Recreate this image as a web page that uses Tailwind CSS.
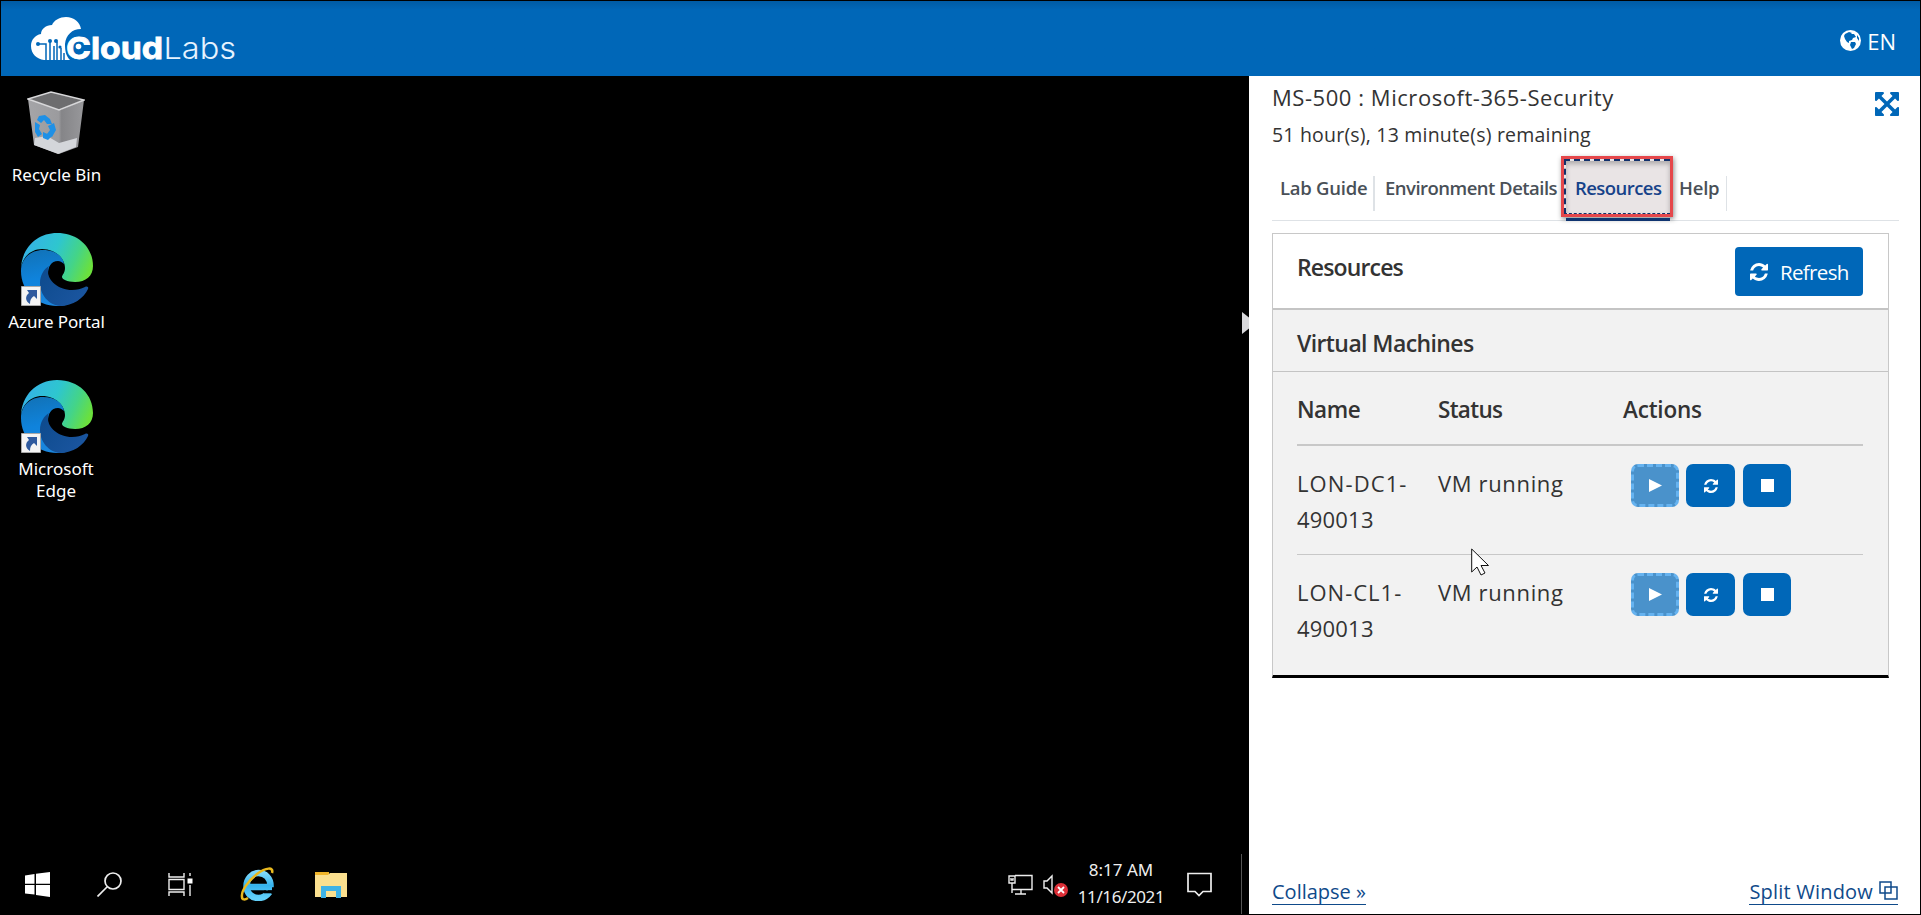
<!DOCTYPE html>
<html lang="en">
<head>
<meta charset="utf-8">
<title>CloudLabs</title>
<script src="https://cdn.jsdelivr.net/npm/@tailwindcss/browser@4"></script>
</head>
<body class="h-[915px] w-[1921px] overflow-hidden bg-black font-['Open_Sans','Noto_Sans',sans-serif]">
<svg class="absolute size-0">
  <symbol id="refresh" viewBox="0 0 1536 1536"><path fill="currentColor" d="M1511 928q0 5-1 7-64 268-268 434.5t-478 166.5q-146 0-282.5-55t-243.5-157l-129 129q-19 19-45 19t-45-19-19-45v-448q0-26 19-45t45-19h448q26 0 45 19t19 45-19 45l-137 137q71 66 161 102t187 36q134 0 250-65t186-179q11-17 53-117 8-23 30-23h192q13 0 22.5 9.5t9.5 22.5zm25-800v448q0 26-19 45t-45 19h-448q-26 0-45-19t-19-45 19-45l138-138q-148-137-349-137-134 0-250 65t-186 179q-11 17-53 117-8 23-30 23h-199q-13 0-22.5-9.5t-9.5-22.5v-7q65-268 270-434.5t480-166.5q146 0 284 55.5t245 156.5l130-129q19-19 45-19t45 19 19 45z"/></symbol>
  <symbol id="edge" viewBox="0 0 72 73">
    <path fill="url(#eg)" d="M0 37C0 15 16 0 36 0c22 0 36 15 36 33 0 10-7 16-18 16-8 0-13-3-13-5 0-2 3-4 3-9 0-9-9-19-23-19C9 16 0 26 0 37z"/>
    <path fill="url(#eb)" d="M0 38C0 26 9 17 22 17c12 0 20 6 21 14-2-2-4-3-6-3-7 0-10 6-10 13 0 15 14 25 26 27-4 3-10 5-17 5C16 73 0 58 0 38z"/>
    <path fill="url(#ed)" d="M28 33c-5 3-9 9-9 17 0 12 9 22 20 23 13 0 24-8 28-17 1-2-1-3-3-2-4 2-8 3-13 3-14 0-24-10-24-18 0-3 0-4 1-6z"/>
  </symbol>
  <symbol id="shortcut" viewBox="0 0 20 20">
    <path fill="#f4f4f4" stroke="#a9a9a9" d="M.5.5h19v19H.5z"/>
    <path fill="#2f5a9e" d="M6 4h10v9l-3-3c-3 2-4 4-4 8-5-3-5-8-1-11z"/>
  </symbol>
  <defs>
    <linearGradient id="eg" x1="0" y1=".3" x2="1" y2=".6"><stop offset="0" stop-color="#35b1e8"/><stop offset=".45" stop-color="#2ec6cf"/><stop offset=".75" stop-color="#44d488"/><stop offset="1" stop-color="#6be03c"/></linearGradient>
    <linearGradient id="eb" x1=".3" y1="0" x2=".5" y2="1"><stop offset="0" stop-color="#1173b9"/><stop offset=".5" stop-color="#0f83dc"/><stop offset="1" stop-color="#1b86dd"/></linearGradient>
    <linearGradient id="ed" x1="0" y1="0" x2="1" y2=".6"><stop offset="0" stop-color="#0d4a8c"/><stop offset="1" stop-color="#1a559f"/></linearGradient>
    <linearGradient id="ie" x1="0" y1="0" x2="0" y2="1"><stop offset="0" stop-color="#7fd8fa"/><stop offset=".5" stop-color="#35b3ee"/><stop offset="1" stop-color="#62d0fa"/></linearGradient>
    <linearGradient id="bin" x1="0" y1="0" x2="1" y2="0"><stop offset="0" stop-color="#a5a5a8"/><stop offset=".55" stop-color="#9b9b9e"/><stop offset=".6" stop-color="#858588"/><stop offset="1" stop-color="#98989b"/></linearGradient>
  </defs>
</svg>

<div class="flex h-[914px] w-[1920px] flex-col pt-px pl-px">
  <header class="flex h-[75px] shrink-0 items-center justify-between bg-[#0067b8] bg-linear-to-b from-[#005ba4] to-[#0067b8] to-12% pr-[24px] pl-[29px] text-white">
    <svg class="h-[50px] w-[210px]" viewBox="30 14 210 50">
      <path fill="#fff" d="M44 60c-7-1-13-6-13-14 0-6 4-11 10-12 0-5 5-9 11-9 2-5 8-8 14-8 8 0 14 5 15 12-9 0-15 6-16 15 0 7 1 12 5 16z"/>
      <g fill="none" stroke="#0067b8" stroke-width="1.5"><path d="M37 44h9v16M50 42v18M54 46v14M57 42v18M61 48v12M64 53v7"/></g>
      <g fill="#0067b8"><circle cx="38" cy="44" r="2"/><circle cx="50" cy="41" r="2"/><circle cx="56" cy="41" r="2"/><circle cx="60" cy="47" r="1.600"/></g>
      <text x="66" y="58.500" textLength="97" lengthAdjust="spacingAndGlyphs" fill="#fff" stroke="#fff" stroke-width=".8" class="font-['Inter',sans-serif] text-[30px] font-bold">Cloud</text>
      <text x="163.500" y="58.500" textLength="72.500" lengthAdjust="spacingAndGlyphs" fill="#e6f3ff" class="font-['Inter',sans-serif] text-[30px] font-light">Labs</text>
      <circle cx="78.500" cy="46.500" r="2.800" fill="#fff"/>
    </svg>
    <div class="flex items-center gap-[6px]">
      <svg class="mt-1 size-[21px]" viewBox="0 0 21 21"><circle cx="10.500" cy="10.500" r="10.500" fill="#fff"/><path fill="#0067b8" d="M5 4l4-2 3 1-1 1 3 0 2 3-3 1-1 2-3 1 0 2-2-1-2-3-1-3zM11 12l4 0 1 2-2 4-2 1-2-4zM17 5l2 3v3l-2-3z"/></svg>
      <span class="mt-[5px] text-[22px] leading-7 whitespace-nowrap">EN</span>
    </div>
  </header>

  <div class="flex min-h-0 flex-1">
    <main class="relative flex w-[1248px] shrink-0 flex-col justify-between bg-black text-white">
      <div class="flex w-[110px] flex-col items-center font-['Noto_Sans',sans-serif] text-[17px] leading-[23px]">
        <svg class="mt-[15px] h-[64px] w-[58px]" viewBox="0 0 58 64">
          <path fill="url(#bin)" d="M1 8l32 11 24-10-6 47-19 7-25-9z"/><path fill="#6d6d6f" d="M2 8L24 1l32 8-24 10z"/><path fill="#d4d6da" d="M7 54l1-7 12-2 12 7 18-5-1 9-18 7z"/>
          <path fill="none" stroke="#d8d8da" stroke-width="1.500" d="M1 8L24 1l33 8-25 10z"/>
          <path fill="#1e90e6" d="M12 25l6-1 5 4 2 5-5 0-3-4-3 3-4-3zM8 31l5 3-1 4 3 5-4 3-3-5zM27 32l2 7-4 7-5-3 3-4-2-4zM16 41l9 4-4 4-5-2z"/>
        </svg>
        <span class="mt-[8px] ml-px whitespace-nowrap">Recycle Bin</span>
        <div class="relative mt-[47px] ml-px h-[73px] w-[72px]"><svg class="size-full"><use href="#edge"/></svg><svg class="absolute bottom-0 left-0 size-5"><use href="#shortcut"/></svg></div>
        <span class="mt-[4px] ml-px tracking-[-0.1px] whitespace-nowrap">Azure Portal</span>
        <div class="relative mt-[47px] ml-px h-[73px] w-[72px]"><svg class="size-full"><use href="#edge"/></svg><svg class="absolute bottom-0 left-0 size-5"><use href="#shortcut"/></svg></div>
        <span class="mt-[4px] whitespace-nowrap">Microsoft</span>
        <span class="-mt-px whitespace-nowrap">Edge</span>
      </div>
      <div class="absolute top-[236px] right-0 h-[22px] w-[7px] bg-[#d9d9dc] [clip-path:polygon(0_0,100%_25%,100%_75%,0_100%)]"></div>
      <div class="flex h-[60px] items-center justify-between pl-[24px]">
        <div class="flex items-center">
          <svg class="size-[25px]" viewBox="0 0 25 25" fill="#fff"><path d="M0 3.500L9.500 2v9.700H0zM11 1.800L25 0v11.700H11zM0 13h9.500v9.500L0 21.500zM11 13h14v12l-14-2z"/></svg>
          <svg class="ml-[47px] size-[25px]" viewBox="0 0 25 25" fill="none" stroke="#eee" stroke-width="1.700"><circle cx="16" cy="9" r="8"/><path d="M10 15L.5 24.500"/></svg>
          <svg class="ml-[46px] size-[25px]" viewBox="0 0 25 25" fill="none" stroke="#eee" stroke-width="1.400"><path d="M1 1v4h15V1M1 7.500h15v10H1zM1 24v-4h15v4M22 1v3M22 13v11"/><path fill="#fff" stroke="none" d="M19.500 6.500h5v5h-5z"/></svg>
          <svg class="ml-[47px] size-[34px]" viewBox="0 0 34 34"><path fill="none" stroke="url(#ie)" stroke-width="6.500" d="M8 20h24M30.500 20C31 11 25 6 18.500 6S6.500 12 6.500 19s5 12 12 12c5 0 8-2 11-6"/><path fill="#000" d="M24 23.500h10v2.800H24z"/><path fill="none" stroke="#e9b91f" stroke-width="2.500" d="M32 6C34 0 26 0 17 7 8 14 1 24 2 30c0 3 3 3 6 1"/></svg>
          <svg class="ml-[41px] h-[27px] w-[32px]" viewBox="0 0 32 27"><path fill="#f0b52a" d="M0 1h14v5H0z"/><path fill="#fbe08f" d="M0 4l13 0 2-2h17v24H0z"/><path fill="#3fb3e6" d="M6 15h20v12h-5v-7H11v7H6z"/></svg>
        </div>
        <div class="flex h-full items-center">
          <svg class="mt-[2px] h-[22px] w-[25px]" viewBox="0 0 25 22" fill="none" stroke="#eee" stroke-width="1.400"><path d="M7 1.500h17v14H4M1 2h6v7H1zM3 4v2h2V4M4 9v10M13 16v4M7 20h11"/></svg>
          <svg class="mt-[3px] ml-[10px] h-[24px] w-[26px]" viewBox="0 0 26 24"><path fill="none" stroke="#eee" stroke-width="1.400" d="M1 7h3l5-5v17l-5-5H1z"/><circle cx="18" cy="16" r="7" fill="#dc2f37"/><path stroke="#fff" stroke-width="1.800" d="M15 13l6 6M21 13l-6 6"/></svg>
          <div class="mr-px mb-[2px] ml-[9px] flex w-[86px] flex-col items-center font-['Noto_Sans',sans-serif] text-[17px] leading-[27px] text-[#eee]"><span class="whitespace-nowrap">8:17 AM</span><span class="tracking-[-0.4px] whitespace-nowrap">11/16/2021</span></div>
          <svg class="ml-[22px] size-[25px]" viewBox="0 0 25 25" fill="none" stroke="#eee" stroke-width="1.700"><path d="M1 1.500h23v18h-8l-4 4-4-4H1z"/></svg>
          <div class="ml-[29px] h-[60px] w-[8px] border-l border-[#555]"></div>
        </div>
      </div>
    </main>

    <aside class="flex w-[671px] flex-col bg-white pr-[21px] pl-[23px] text-[#333]">
      <div class="flex justify-between">
        <div class="flex flex-col items-start">
          <span class="mt-[6px] text-[22px] tracking-[0.55px] leading-[30px] whitespace-nowrap">MS-500 : Microsoft-365-Security</span>
          <span class="mt-[9px] text-[19.500px] tracking-[0.2px] leading-[28px] whitespace-nowrap">51 hour(s), 13 minute(s) remaining</span>
        </div>
        <svg class="mt-[16px] size-[24px] text-[#0067b8]" viewBox="128 128 1536 1536"><path fill="currentColor" d="M1411 541l-355 355 355 355 144-144q29-31 70-14 39 17 39 59v448q0 26-19 45t-45 19h-448q-42 0-59-40-17-39 14-69l144-144-355-355-355 355 144 144q31 30 14 69-17 40-59 40h-448q-26 0-45-19t-19-45v-448q0-42 40-59 39-17 69 14l144 144 355-355-355-355-144 144q-19 19-45 19-12 0-24-5-40-17-40-59v-448q0-26 19-45t45-19h448q42 0 59 40 17 39-14 69l-144 144 355 355 355-355-144-144q-31-30-14-69 17-40 59-40h448q26 0 45 19t19 45v448q0 42-39 59-13 5-25 5-26 0-45-19z"/></svg>
      </div>
      <nav class="mt-[7px] flex h-[65px] w-[627px] shrink-0 items-start border-b border-[#dee2e6] text-[18.500px] font-semibold tracking-[-0.4px] text-[#495057]">
        <div class="mt-[20px] flex h-[35px] w-[103px] items-start border-r-2 border-[#dee2e6] pl-[8px]"><span class="leading-[24px] tracking-[-0.25px] whitespace-nowrap">Lab Guide</span></div>
        <div class="mt-[20px] flex h-[35px] w-[186px] items-start pl-[10px]"><span class="leading-[24px] tracking-[-0.52px] whitespace-nowrap">Environment Details</span></div>
        <div class="h-[66px] w-[112px] shrink-0">
          <div class="h-[61px] border-[3px] border-[#e5474b] bg-[#e9e4e5] shadow-[1px_2px_5px_rgba(0,0,0,.45)]">
            <div class="flex h-full items-start border-t-2 border-b border-l-2 border-dashed border-[#12306b] pt-[15px] pl-[9px] shadow-[inset_0_3px_5px_rgba(0,0,0,.25)]"><span class="leading-[24px] tracking-[-0.55px] whitespace-nowrap text-[#164289]">Resources</span></div>
          </div>
          <div class="relative mt-[1px] ml-[5px] h-[3px] w-[104px] bg-[#0f3470]"></div>
        </div>
        <div class="mt-[20px] flex h-[35px] w-[54px] items-start border-r border-[#dee2e6] pl-[6px]"><span class="leading-[24px] tracking-[-0.2px] whitespace-nowrap">Help</span></div>
      </nav>

      <section class="mt-[12px] flex h-[445px] w-[617px] shrink-0 flex-col border border-b-[3px] border-[#c8c8c8] border-b-black bg-[#f2f2f2] text-[22px]">
        <div class="flex h-[76px] shrink-0 items-start justify-between border-b-2 border-[#c4c4c4] bg-white pr-[25px] pl-6">
          <span class="mt-[18px] text-[23px] tracking-[-0.85px] font-semibold leading-[30px] whitespace-nowrap">Resources</span>
          <button class="mt-[13px] flex h-[49px] w-[128px] items-center rounded-[4px] bg-[#0067b8] pl-[15px] text-white"><svg class="size-[18px]"><use href="#refresh"/></svg><span class="mt-[2px] ml-[12px] text-[20.500px] tracking-[-0.65px] whitespace-nowrap">Refresh</span></button>
        </div>
        <div class="flex h-[62px] shrink-0 items-start border-b border-[#c4c4c4] pl-6"><span class="mt-[18px] text-[23px] tracking-[-0.6px] font-semibold leading-[30px] whitespace-nowrap">Virtual Machines</span></div>
        <div class="mr-[25px] ml-6 flex flex-col">
          <div class="grid h-[74px] grid-cols-[141px_185px_1fr] items-start border-b-2 border-[#c8c8c8] pt-[23px] text-[22.500px] tracking-[-0.5px] font-semibold leading-[30px] whitespace-nowrap">
            <div>Name</div>
            <div class="tracking-[-0.7px]">Status</div>
            <div class="tracking-[-0.2px]">Actions</div>
          </div>
          <div class="grid h-[109px] grid-cols-[141px_193px_1fr] items-start border-b border-[#c8c8c8] pt-[18px]">
            <div class="flex flex-col items-start leading-9"><span class="mt-px tracking-[1.1px] whitespace-nowrap">LON-DC1-</span><span class="tracking-[0.2px] whitespace-nowrap">490013</span></div>
            <div class="pt-px leading-9 tracking-[0.65px] whitespace-nowrap">VM running</div>
            <div class="flex">
              <button class="grid h-[43px] w-[48px] place-items-center rounded-[7px] border-3 border-dashed border-[#66b3f0] bg-[#4a92cb]"><svg class="h-[13px] w-[13px]" viewBox="0 0 13 13"><path fill="#fff" d="M0 0l13 6.500L0 13z"/></svg></button>
              <button class="ml-[7px] grid h-[43px] w-[49px] place-items-center rounded-[7px] bg-[#0067b8] text-white"><svg class="size-[14px]"><use href="#refresh"/></svg></button>
              <button class="ml-[8px] grid h-[43px] w-[48px] place-items-center rounded-[7px] bg-[#0067b8]"><span class="size-[13px] bg-white"></span></button>
            </div>
          </div>
          <div class="grid h-[109px] grid-cols-[141px_193px_1fr] items-start pt-[18px]">
            <div class="flex flex-col items-start leading-9"><span class="mt-px tracking-[1px] whitespace-nowrap">LON-CL1-</span><span class="tracking-[0.2px] whitespace-nowrap">490013</span></div>
            <div class="pt-px leading-9 tracking-[0.65px] whitespace-nowrap">VM running</div>
            <div class="flex">
              <button class="grid h-[43px] w-[48px] place-items-center rounded-[7px] border-3 border-dashed border-[#66b3f0] bg-[#4a92cb]"><svg class="h-[13px] w-[13px]" viewBox="0 0 13 13"><path fill="#fff" d="M0 0l13 6.500L0 13z"/></svg></button>
              <button class="ml-[7px] grid h-[43px] w-[49px] place-items-center rounded-[7px] bg-[#0067b8] text-white"><svg class="size-[14px]"><use href="#refresh"/></svg></button>
              <button class="ml-[8px] grid h-[43px] w-[48px] place-items-center rounded-[7px] bg-[#0067b8]"><span class="size-[13px] bg-white"></span></button>
            </div>
          </div>
        </div>
      </section>
      <footer class="mt-auto mr-px mb-[9px] flex items-center justify-between text-[20px] leading-[28px] text-[#0f4a8a]">
        <a class="border-b border-[#0f4a8a] leading-[25px]"><span class="whitespace-nowrap">Collapse »</span></a>
        <a class="flex items-center gap-[6px] border-b border-[#0f4a8a] leading-[25px]"><span class="tracking-[0.2px] whitespace-nowrap">Split Window</span><svg class="mb-[3px] size-[19px]" viewBox="0 0 19 19" fill="none" stroke="currentColor" stroke-width="1.500"><path d="M1 1h11v11H1zM6 6h12v12H6z"/></svg></a>
      </footer>
    </aside>
  </div>
</div>
<svg class="absolute top-[548px] left-[1471px] h-[28px] w-[19px]" viewBox="0 0 19 28"><path fill="#fff" stroke="#111" d="M.7 1v23l5.300-5 4 8 4-2-4-7.500h7.500z"/></svg>
</body>
</html>
